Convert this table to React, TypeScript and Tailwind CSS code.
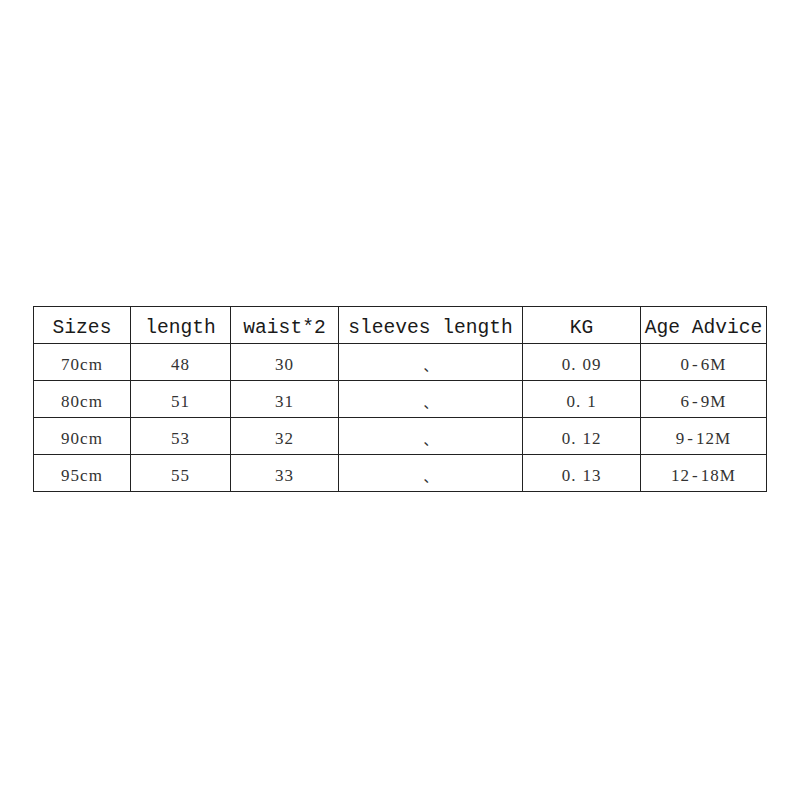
import React from "react";

const headers = ["Sizes", "length", "waist*2", "sleeves length", "KG", "Age Advice"];
const widths = ["w-[97px]", "w-[100px]", "w-[108px]", "w-[184px]", "w-[118px]", "w-[126px]"];

const rows: [string, string, string, string, [string, string], string][] = [
  ["70cm", "48", "30", "、", ["0", "09"], "0-6M"],
  ["80cm", "51", "31", "、", ["0", "1"], "6-9M"],
  ["90cm", "53", "32", "、", ["0", "12"], "9-12M"],
  ["95cm", "55", "33", "、", ["0", "13"], "12-18M"],
];

const serif = { fontFamily: '"Liberation Serif", "Times New Roman", serif' };

export default function App() {
  return (
    <div className="w-[800px] h-[800px] bg-white pt-[306px] pl-[33px]">
      <table
        className="border-collapse table-fixed w-[733px] text-[#1a1a1a]"
        style={{ fontFamily: '"Liberation Mono", "DejaVu Sans Mono", monospace' }}
      >
        <colgroup>
          {widths.map((w, i) => (
            <col key={i} className={w} />
          ))}
        </colgroup>
        <thead>
          <tr className="h-[37px]">
            {headers.map((h) => (
              <th
                key={h}
                className="border border-[#222] p-0 pt-[6px] text-center font-normal text-[19.6px] leading-[28px] whitespace-nowrap"
              >
                {h}
              </th>
            ))}
          </tr>
        </thead>
        <tbody>
          {rows.map((r) => (
            <tr key={r[0]} className="h-[37px]" style={serif}>
              <td className="border border-[#222] p-0 pt-[6px] text-center text-[17px] tracking-[1px] leading-[26px] text-[#333]">{r[0]}</td>
              <td className="border border-[#222] p-0 pt-[6px] text-center text-[17px] tracking-[1px] leading-[26px] text-[#333]">{r[1]}</td>
              <td className="border border-[#222] p-0 pt-[6px] text-center text-[17px] tracking-[1px] leading-[26px] text-[#333]">{r[2]}</td>
              <td
                className="border border-[#222] p-0 pt-[6px] text-center text-[14px] leading-[26px] text-[#333]"
                style={{ fontFamily: '"Noto Sans CJK SC", sans-serif' }}
              >
                {r[3]}
              </td>
              <td className="border border-[#222] p-0 pt-[6px] text-center text-[17px] tracking-[1px] leading-[26px] text-[#333]">
                {r[4][0]}
                <span className="mr-[6px]">.</span>
                {r[4][1]}
              </td>
              <td className="border border-[#222] p-0 pt-[6px] text-center text-[17px] tracking-[1px] leading-[26px] text-[#333]">
                {r[5].split("-")[0]}
                <span className="px-[2px]">-</span>
                {r[5].split("-")[1]}
              </td>
            </tr>
          ))}
        </tbody>
      </table>
    </div>
  );
}
